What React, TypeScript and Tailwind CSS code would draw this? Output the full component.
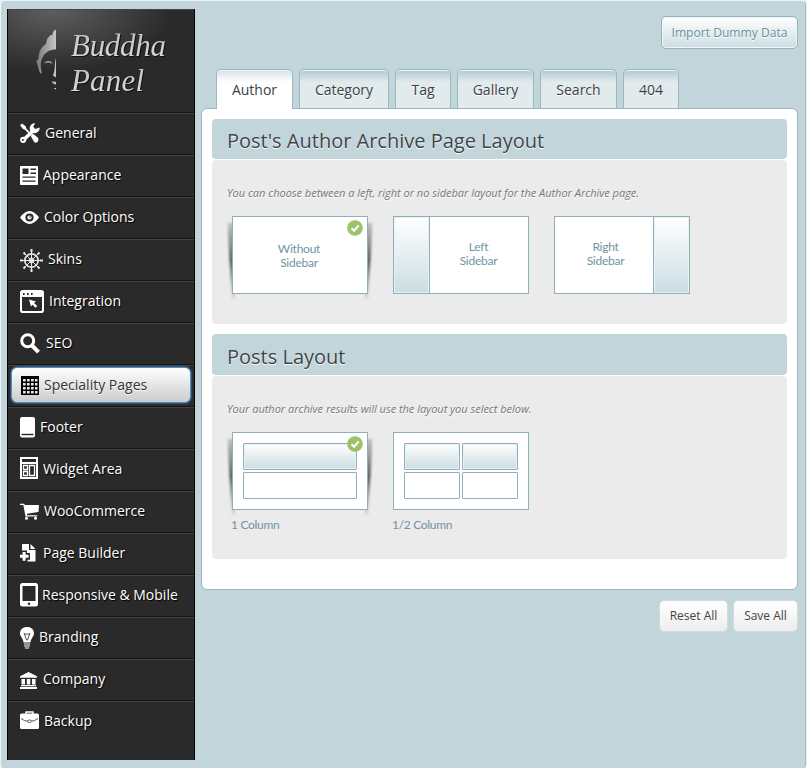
import type { ReactNode } from "react";

type NavItem = { label: string; width: number; gap: number; icon: ReactNode; active?: boolean };

const nav: NavItem[] = [
  {
    label: "General", width: 20, gap: 5,
    icon: (
      <>
        <path d="M5 17.5 L14.5 8.5" stroke="#fff" strokeWidth="3.6" />
        <path d="M15.2 2.2 L13.2 5.8 L15.2 8 L19.6 6.4 A5 5 0 1 1 15.2 2.2 Z" fill="#fff" />
        <circle cx="3.2" cy="18.8" r="3.1" fill="#fff" />
        <circle cx="2.9" cy="19.1" r="1" fill="#2b2b2b" />
        <path d="M0 4.2 L2.2 2.6 L5.8 5.5 L6.2 7.5 L9.5 10.8 L8.2 12 L4.8 8.6 L3 8 Z" fill="#fff" />
        <path d="M10.6 14.8 L13 12.7 L18 16.8 Q19.3 19.4 17.5 21 Q15.6 22.4 14 20.8 Z" fill="#fff" />
      </>
    ),
  },
  {
    label: "Appearance", width: 18, gap: 5,
    icon: (
      <>
        <rect x="0" y="3" width="18" height="19" rx=".7" fill="#fff" />
        <path d="M2.500 5.500h6v5.500h-6zM10.500 5.500h5.500v1.500h-5.500zM10.500 9.500h5.500v1.500h-5.500zM2.500 13.500h13v1.300H2.500zM2.500 17.500h13v1.300H2.500z" fill="#292929" />
      </>
    ),
  },
  {
    label: "Color Options", width: 19, gap: 5,
    icon: (
      <>
        <path d="M0 12.5 Q9.5 -.5 19 12.5 Q9.5 25.5 0 12.5Z" fill="#fff" />
        <circle cx="9.5" cy="12.5" r="4.1" fill="#292929" />
        <circle cx="9.5" cy="12.5" r="2.1" fill="#fff" />
        <circle cx="10.1" cy="12" r=".8" fill="#292929" />
      </>
    ),
  },
  {
    label: "Skins", width: 23, gap: 5,
    icon: (
      <g fill="none" stroke="#e8e8e8">
        <circle cx="11.5" cy="13.5" r="6.7" strokeWidth="1.7" />
        <circle cx="11.5" cy="13.5" r="2.5" strokeWidth="1" />
        <path d="M11.5 3V24M1 13.5H22M4.1 6.1L18.9 20.9M18.9 6.1L4.1 20.9" strokeWidth="1" />
        <path d="M11.5 2v3M11.5 22v3M0 13.5h3M20 13.5h3M3.5 5.5l1.7 1.7M17.8 19.8l1.7 1.7M19.5 5.5l-1.7 1.7M5.2 19.8l-1.7 1.7" strokeWidth="2" />
      </g>
    ),
  },
  {
    label: "Integration", width: 24, gap: 5,
    icon: (
      <>
        <rect x="1" y="2" width="22" height="21" rx="1.8" fill="none" stroke="#fff" strokeWidth="2" />
        <path d="M1 2h22v6H1z" fill="#fff" />
        <path d="M3 4h1.6v2H3zM7 4h1.6v2H7zM11 4h1.6v2H11z" fill="#292929" />
        <path d="M9 10.5 L16 12.5 L14 14 L17.3 17 L15.5 18.8 L12.6 15.7 L11 17.5Z" fill="#fff" />
      </>
    ),
  },
  {
    label: "SEO", width: 21, gap: 5,
    icon: (
      <>
        <circle cx="7.7" cy="9.8" r="6" fill="none" stroke="#fff" strokeWidth="3" />
        <path d="M12 14.5L18.5 21.2" stroke="#fff" strokeWidth="4" />
      </>
    ),
  },
  {
    label: "Speciality Pages", width: 19, gap: 5, active: true,
    icon: (
      <>
        <rect x="1" y="3" width="18" height="19" fill="#000" />
        {[6, 10, 14, 18].map((y) => (
          <path key={y} d={`M3 ${y}h2.700v2.400h-2.700zM7 ${y}h2.700v2.400h-2.700zM11 ${y}h2.700v2.400h-2.700zM15 ${y}h2.500v2.400h-2.500z`} fill="#e8e8e8" />
        ))}
      </>
    ),
  },
  {
    label: "Footer", width: 15, gap: 5,
    icon: (
      <>
        <rect x="0" y="2" width="15" height="20.5" rx="2" fill="#fff" />
        <path d="M1.5 19.500h12" stroke="#292929" strokeWidth="1.4" />
      </>
    ),
  },
  {
    label: "Widget Area", width: 18, gap: 5,
    icon: (
      <>
        <path d="M0 0h18v22H0z" fill="#fff" />
        <path d="M2 2h14v3H2zM2 7h14v13H2z" fill="#292929" />
        <path d="M3.5 8.5h4v4h-4zM3.5 14.5h4v4h-4zM9.5 8.5h5v10h-5z" fill="none" stroke="#fff" strokeWidth="1.3" />
      </>
    ),
  },
  {
    label: "WooCommerce", width: 19, gap: 5,
    icon: (
      <>
        <path d="M0 4.700h4l1 1.300H19l-.5 7L7 14.800l.2 1.400h10v1.300H5.500L3.300 6H0z" fill="#fff" />
        <circle cx="6.500" cy="19.200" r="1.500" fill="#fff" />
        <circle cx="15.500" cy="19.200" r="1.500" fill="#fff" />
      </>
    ),
  },
  {
    label: "Page Builder", width: 17, gap: 6,
    icon: (
      <>
        <path d="M2 3h7v6h6.5v11.500H7.500v-1.800H10V12H7V9.500H2z" fill="#fff" />
        <path d="M10.500 3l5 5h-5z" fill="#fff" />
        <path d="M2.600 11h3v2.800h3v3h-3v3h-3v-3H0v-3h2.600z" fill="#fff" />
      </>
    ),
  },
  {
    label: "Responsive & Mobile", width: 18, gap: 4,
    icon: (
      <>
        <rect x="0" y="0" width="18" height="23.500" rx="2.500" fill="#fff" />
        <rect x="2.500" y="3" width="13" height="15" fill="#292929" />
        <circle cx="9" cy="20.700" r="1.300" fill="#292929" />
      </>
    ),
  },
  {
    label: "Branding", width: 14, gap: 5,
    icon: (
      <>
        <path d="M7 2C2.800 2 0 4.700 0 8.300c0 3.400 3 5 3.600 9.300h6.800c.6-4.300 3.600-5.900 3.600-9.300C14 4.700 11.200 2 7 2z" fill="#fff" />
        <path d="M4 8l2.500 7h1L10 8M4.500 8.500l1.800 1 .8-1 .8 1 1.800-1" fill="none" stroke="#444" strokeWidth=".9" />
        <path d="M3.800 19h6.400M4 21h6M5 23h4" stroke="#fff" strokeWidth="1.200" />
      </>
    ),
  },
  {
    label: "Company", width: 17, gap: 6,
    icon: (
      <path d="M8.500 5L17 9.200v1.500H0V9.200zM1.500 12h3.500v5.500H1.500zM6.800 12h3.500v5.500H6.800zM12 12H15.500v5.500h-3.500zM1 18h15v1.200H1zM0 20h17v2H0z" fill="#fff" />
    ),
  },
  {
    label: "Backup", width: 19, gap: 5,
    icon: (
      <>
        <path d="M6 5.500V3h7v2.500" fill="none" stroke="#fff" strokeWidth="1.400" />
        <rect x="0" y="4.500" width="19" height="15.500" rx="1.500" fill="#fff" />
        <path d="M1 9.500Q5 12.500 8 12.200M18 9.500Q14 12.500 11 12.200" fill="none" stroke="#444" strokeWidth=".9" />
        <ellipse cx="9.500" cy="12.300" rx="2" ry="1.300" fill="#fff" stroke="#444" strokeWidth=".8" />
      </>
    ),
  },
];

function Logo() {
  return (
    <svg width="186" height="102" viewBox="8 9 186 102" className="block">
      <defs>
        <linearGradient id="face" gradientUnits="userSpaceOnUse" x1="36" y1="0" x2="56" y2="0">
          <stop offset="0" stopColor="#777" />
          <stop offset="1" stopColor="#c6c6c6" />
        </linearGradient>
        <linearGradient id="silver" x1="0" y1="0" x2="0" y2="1">
          <stop offset="0" stopColor="#bcbcbc" />
          <stop offset="1" stopColor="#dedede" />
        </linearGradient>
      </defs>
      <g fill="url(#face)">
        <path d="M56 28.500C53.500 29.500 52 32 53 33.500C49.500 34 46.500 37 46.300 42.500C41 46 38.500 51 38.500 58L36.300 60C38 64 38.500 70 40.500 72.500L42 72C40.500 66 40 61 42.500 56.500C45 51 50 48.500 56 48.500Z" />
        <path d="M44.500 61.500C48 59 51.500 59.800 52.800 63.500C50.500 61.300 48 61 44.500 62.300Z" />
        <path d="M56 57C54 63 56 68 52.800 74.500L56 76.500Z" />
        <path d="M51.500 80.500L56 80.700V83.500C54 83.300 53 82.500 51.500 80.500ZM53.500 87H56V88.800Z" />
      </g>
      <g fill="url(#silver)" fontFamily="'Liberation Serif', serif" fontStyle="italic" fontSize="31" className="drop-shadow-[1px_1px_0_#111]">
        <text x="71" y="55" textLength="95" lengthAdjust="spacing">Buddha</text>
        <text x="71" y="90" textLength="73" lengthAdjust="spacing">Panel</text>
      </g>
    </svg>
  );
}

function Sidebar() {
  return (
    <aside className="h-[751px] w-[188px] shrink-0 border-x border-black bg-[#2a2a2a]">
      <div className="h-[104px] border-t border-b border-t-[#444] border-b-[#151515] bg-[radial-gradient(ellipse_120px_62px_at_45px_0px,#5e5e5e,#2a2a2a)]">
        <Logo />
      </div>
      <nav>
        {nav.map((item) => (
          <a
            key={item.label}
            className="relative isolate flex h-[42px] items-start border-t border-b border-t-[#424242] border-b-[#151515] pl-3 last:border-b-0"
          >
            {item.active && (
              <span className="absolute top-[1px] left-[3px] -z-10 h-[36px] w-[180px] rounded-[6px] border border-[#4a90cc] bg-linear-to-b from-white to-[#cbcbcb] shadow-[0_0_2px_#62aee8]" />
            )}
            <svg className="mt-[7px] shrink-0" width={item.width} height="26" viewBox={`0 0 ${item.width} 26`}>
              {item.icon}
            </svg>
            <span
              style={{ marginLeft: item.gap }}
              className={
                item.active
                  ? "mt-[9px] text-sm leading-5 whitespace-nowrap text-[#333] [text-shadow:0_1px_0_#fff]"
                  : "mt-[9px] text-sm leading-5 whitespace-nowrap text-white [text-shadow:1px_1px_1px_#000]"
              }
            >
              {item.label}
            </span>
          </a>
        ))}
      </nav>
    </aside>
  );
}

const tabs = [
  { label: "Author", width: "w-[77px]" },
  { label: "Category", width: "w-[90px]" },
  { label: "Tag", width: "w-[56px]" },
  { label: "Gallery", width: "w-[77px]" },
  { label: "Search", width: "w-[77px]" },
  { label: "404", width: "w-[56px]" },
];

function Tabs() {
  return (
    <div className="relative z-10 -mb-px ml-[15px] flex h-10 gap-[6px]">
      {tabs.map((tab, i) => (
        <div
          key={tab.label}
          className={`${tab.width} ${
            i === 0
              ? "border-b-0 bg-linear-to-b from-[#d5e2e6] to-white to-[12px]"
              : "border-b bg-linear-to-b from-[#b1c9d0] to-[#e1eaec] to-[12px]"
          } flex justify-center rounded-t-[5px] border-x border-t border-[#9bb8c0] pt-[10px] text-sm leading-5 text-[#3b4145] shadow-[inset_0_1px_0_#edf4f5] [text-shadow:0_1px_0_#fff]`}
        >
          {tab.label}
        </div>
      ))}
    </div>
  );
}

function SelectedMark() {
  return (
    <>
      <svg className="absolute -top-px -left-[9px] -z-10" width="154" height="88" viewBox="0 0 154 88">
        <defs>
          <filter id="soft" x="-20%" y="-20%" width="140%" height="140%">
            <feGaussianBlur stdDeviation="1.300" />
          </filter>
          <linearGradient id="fade" x1="0" y1="0" x2="0" y2="1">
            <stop offset="0" stopColor="#444" stopOpacity=".25" />
            <stop offset=".5" stopColor="#333" stopOpacity=".75" />
            <stop offset="1" stopColor="#444" stopOpacity=".08" />
          </linearGradient>
        </defs>
        <path filter="url(#soft)" fill="url(#fade)" d="M12 8H5C5 28 7 55 9 84H12ZM142 8H149C149 28 147 55 145 84H142Z" />
      </svg>
      <svg className="absolute top-[4px] right-[5px]" width="16" height="16" viewBox="0 0 16 16">
        <circle cx="8" cy="8" r="7.800" fill="#9bc267" />
        <path d="M4.500 8.200L7.100 10.700L11.700 5.500" fill="none" stroke="#fff" strokeWidth="2.200" />
      </svg>
    </>
  );
}

function Thumb({ children, selected }: { children: ReactNode; selected?: boolean }) {
  return (
    <div className="relative isolate h-[78px] w-[136px]">
      <div className="flex h-full w-full border border-[#8fb0ba] bg-white text-center font-[Lato,sans-serif] text-xs leading-[14px] tracking-[-0.25px] text-[#6f95a1]">
        {children}
      </div>
      {selected && <SelectedMark />}
    </div>
  );
}

const tint = "bg-linear-to-b from-white to-[#cbdde3] shadow-[inset_0_0_0_1px_#e9f1f3]";

type SectionProps = { title: string; hint: string; headClass: string; bodyClass: string; children: ReactNode };

function Section({ title, hint, headClass, bodyClass, children }: SectionProps) {
  return (
    <section>
      <h2 className={`${headClass} rounded-[4px] border-b border-white bg-[#c2d5da] bg-clip-padding pl-[15px] text-xl leading-7 text-[#3d464a] [text-shadow:0_1px_1px_#fff]`}>
        {title}
      </h2>
      <div className={`${bodyClass} rounded-[4px] bg-[#ebebeb] px-[15px] pt-[25px]`}>
        <p className="text-[11px] leading-4 tracking-[-0.02px] text-[#777] italic [text-shadow:0_1px_0_#fff]">{hint}</p>
        <div className="mt-[15px] ml-[5px] flex gap-[25px]">{children}</div>
      </div>
    </section>
  );
}

function Cell({ filled }: { filled?: boolean }) {
  return <div className={`rounded-[1px] border border-[#8fb0ba] ${filled ? tint : "bg-white"}`} />;
}

function Caption({ children }: { children: ReactNode }) {
  return <p className="mt-[7px] -ml-px font-[Lato,sans-serif] text-xs leading-4 tracking-[-0.3px] text-[#6f95a1]">{children}</p>;
}

export default function App() {
  return (
    <div className="h-[768px] w-[807px] overflow-hidden bg-[#e9f1f3] font-['Open_Sans',sans-serif]">
      <div className="flex h-[769px] w-[806px] gap-[6px] rounded-[5px] border-t border-r border-l border-t-[#edf4f5] border-r-[#9fb9c1] border-l-[#edf4f5] bg-[#c2d5da] pt-2 pl-[6px]">
        <Sidebar />
        <main className="w-[597px]">
          <div className="flex h-[60px] justify-end pt-[7px]">
            <button className="h-[33px] w-[137px] rounded-[5px] border border-[#94b3bb] bg-linear-to-b from-white to-[#cbdde3] text-[12.1px] leading-5 whitespace-nowrap text-[#68909c] shadow-[inset_0_0_0_1px_#f1f6f8] [text-shadow:0_1px_0_#fff]">
              Import Dummy Data
            </button>
          </div>
          <Tabs />
          <div className="flex h-[482px] flex-col gap-[10px] rounded-[6px] border border-[#9bb8c0] bg-white px-[10px] pt-[10px]">
            <Section
              title="Post's Author Archive Page Layout"
              hint="You can choose between a left, right or no sidebar layout for the Author Archive page."
              headClass="h-[41px] pt-[8px]"
              bodyClass="h-[164px]"
            >
              <Thumb selected>
                <span className="w-full pt-[25px] pr-[2px]">Without<br />Sidebar</span>
              </Thumb>
              <Thumb>
                <span className={`w-[36px] shrink-0 border-r border-[#8fb0ba] ${tint}`} />
                <span className="flex-1 pt-[23px] pr-px">Left<br />Sidebar</span>
              </Thumb>
              <Thumb>
                <span className="flex-1 pt-[23px] pl-[3px]">Right<br />Sidebar</span>
                <span className={`w-[36px] shrink-0 border-l border-[#8fb0ba] ${tint}`} />
              </Thumb>
            </Section>
            <Section
              title="Posts Layout"
              hint="Your author archive results will use the layout you select below."
              headClass="h-[42px] pt-[9px]"
              bodyClass="h-[183px]"
            >
              <div>
                <Thumb selected>
                  <div className="m-[10px] grid w-[114px] grid-rows-2 gap-[2px]"><Cell filled /><Cell /></div>
                </Thumb>
                <Caption>1 Column</Caption>
              </div>
              <div>
                <Thumb>
                  <div className="m-[10px] grid w-[114px] grid-cols-2 grid-rows-2 gap-[2px]"><Cell filled /><Cell filled /><Cell /><Cell /></div>
                </Thumb>
                <Caption>1/2 Column</Caption>
              </div>
            </Section>
          </div>
          <div className="flex justify-end gap-[5px] pt-[10px] text-xs text-[#444]">
            <button className="h-8 w-[69px] rounded-[5px] border border-[#d5d9da] bg-linear-to-b from-white to-[#ededed]">Reset All</button>
            <button className="h-8 w-[65px] rounded-[5px] border border-[#d5d9da] bg-linear-to-b from-white to-[#ededed]">Save All</button>
          </div>
        </main>
      </div>
    </div>
  );
}
